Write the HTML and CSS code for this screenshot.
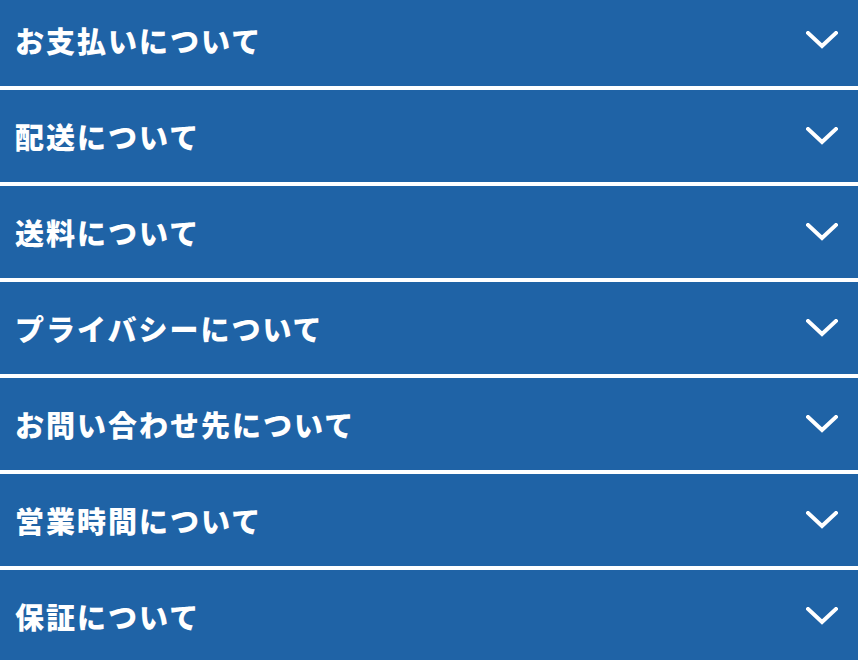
FILE: index.html
```html
<!DOCTYPE html>
<html lang="ja">
<head>
    <meta charset="UTF-8">
    <meta name="viewport" content="width=device-width, initial-scale=1.0">
    <title>よくある質問</title>
    <link rel="stylesheet" href="styles.css">
</head>
<body>
    <ul class="faq-list">
        <li class="faq-item">
            <span class="faq-title">お支払いについて</span>
            <svg class="chevron" viewBox="0 0 32 18"><path d="M2 2 L16 15 L30 2"/></svg>
        </li>
        <li class="faq-item">
            <span class="faq-title">配送について</span>
            <svg class="chevron" viewBox="0 0 32 18"><path d="M2 2 L16 15 L30 2"/></svg>
        </li>
        <li class="faq-item">
            <span class="faq-title">送料について</span>
            <svg class="chevron" viewBox="0 0 32 18"><path d="M2 2 L16 15 L30 2"/></svg>
        </li>
        <li class="faq-item">
            <span class="faq-title">プライバシーについて</span>
            <svg class="chevron" viewBox="0 0 32 18"><path d="M2 2 L16 15 L30 2"/></svg>
        </li>
        <li class="faq-item">
            <span class="faq-title">お問い合わせ先について</span>
            <svg class="chevron" viewBox="0 0 32 18"><path d="M2 2 L16 15 L30 2"/></svg>
        </li>
        <li class="faq-item">
            <span class="faq-title">営業時間について</span>
            <svg class="chevron" viewBox="0 0 32 18"><path d="M2 2 L16 15 L30 2"/></svg>
        </li>
        <li class="faq-item">
            <span class="faq-title">保証について</span>
            <svg class="chevron" viewBox="0 0 32 18"><path d="M2 2 L16 15 L30 2"/></svg>
        </li>
    </ul>
</body>
</html>
```

FILE: styles.css
```css
* {
    margin: 0;
    padding: 0;
    box-sizing: border-box;
}

body {
    background: #ffffff;
    font-family: "Noto Sans CJK JP", "Noto Sans", sans-serif;
    overflow: hidden;
}

.faq-list {
    list-style: none;
    display: flex;
    flex-direction: column;
    gap: 4px;
    margin-top: -6px;
}

.faq-item {
    height: 92px;
    background: #1f63a6;
    display: flex;
    align-items: center;
    justify-content: space-between;
    padding: 0 20px 0 15px;
    cursor: pointer;
}

.faq-title {
    color: #ffffff;
    font-size: 29px;
    font-weight: 900;
    letter-spacing: 2px;
}

.chevron {
    width: 32px;
    height: 18px;
    fill: none;
    stroke: #ffffff;
    stroke-width: 4;
    stroke-linecap: square;
}
```
